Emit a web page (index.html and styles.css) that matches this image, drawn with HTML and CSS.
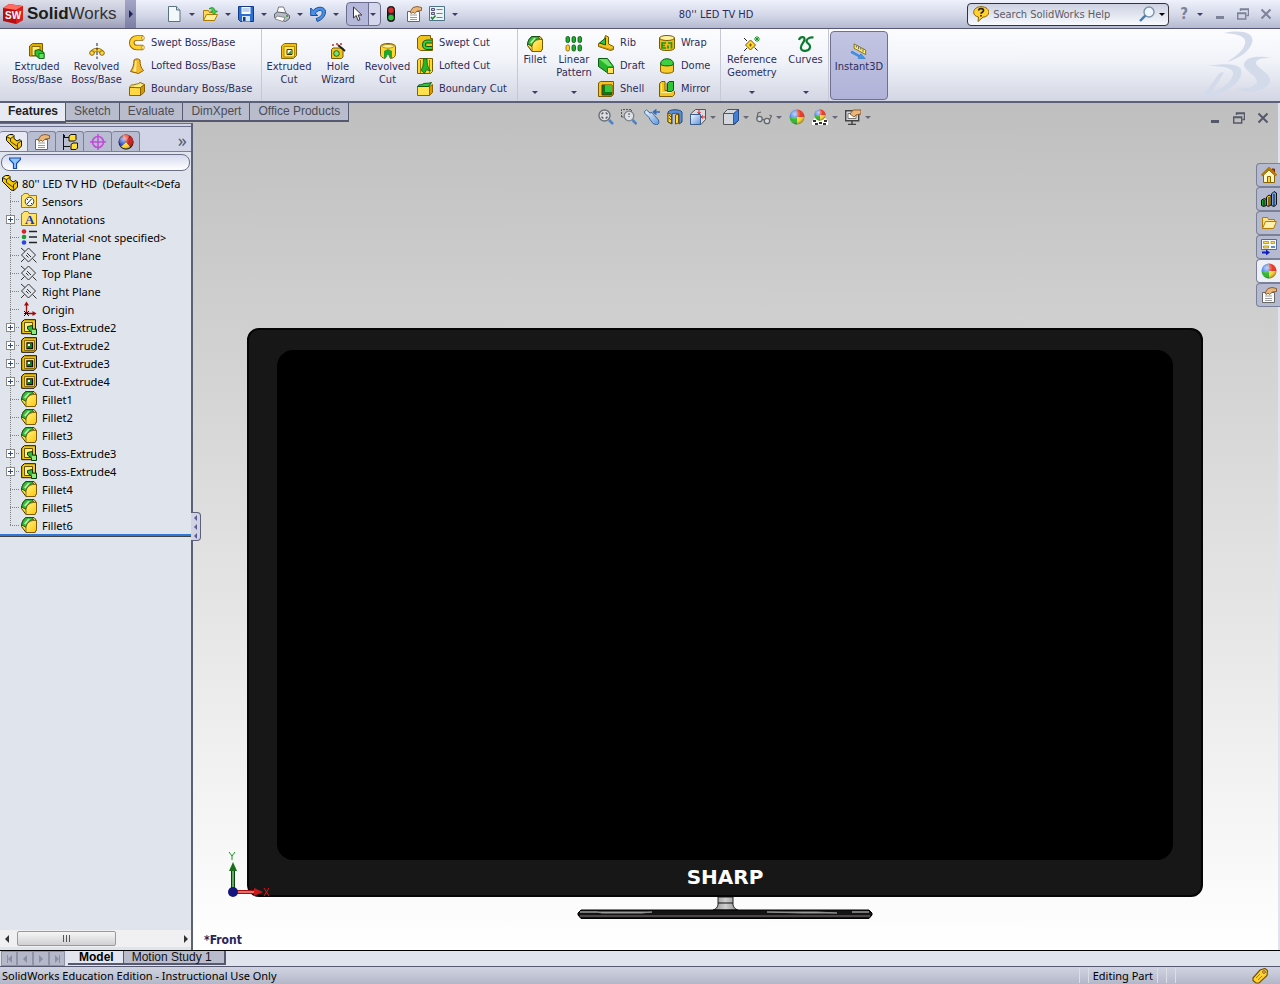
FILE: index.html
```
<!DOCTYPE html>
<html lang="en">
<head>
    <meta charset="UTF-8">
    <meta name="viewport" content="width=device-width, initial-scale=1.0">
    <title>SolidWorks - 80" LED TV HD</title>
    <link rel="stylesheet" href="styles.css">
</head>
<body>

    <!-- shared icons -->
    <svg class="sprite" aria-hidden="true">
        <defs>
            <linearGradient id="gold" x1="0" y1="0" x2="1" y2="1"><stop offset="0" stop-color="#fff68a"/><stop offset="1" stop-color="#ffc400"/></linearGradient>
            <linearGradient id="glass" x1="0" y1="0" x2="1" y2="1"><stop offset="0" stop-color="#f4faff"/><stop offset="1" stop-color="#5d93dc"/></linearGradient>
            <linearGradient id="chrome" x1="0" x2="1"><stop offset="0" stop-color="#8d8d8d"/><stop offset="0.5" stop-color="#cfcfcf"/><stop offset="1" stop-color="#8d8d8d"/></linearGradient>
            <radialGradient id="shine" cx="0.35" cy="0.3" r="0.7"><stop offset="0" stop-color="#fff" stop-opacity="0.7"/><stop offset="0.6" stop-color="#fff" stop-opacity="0"/><stop offset="1" stop-color="#000" stop-opacity="0.35"/></radialGradient>
        </defs>
        <symbol id="i-new" viewBox="0 0 16 16"><path d="M2.5.5h8l3.500 3.500v11.500h-11.500z" fill="#f3f8fb" stroke="#5a7280"/><path d="M10.500.5v3.500h3.500" fill="#cfdde5" stroke="#5a7280"/></symbol>
        <symbol id="i-open" viewBox="0 0 16 16"><path d="M1.500 14.500v-10h5l1 2h5v8z" fill="#ffd75a" stroke="#b37a00"/><path d="M1.500 14.500l3-6h11l-3 6z" fill="#ffef9e" stroke="#b37a00"/><path d="M7 3c3-3 6-1 6 2h2.500l-3.500 3.500-3.500-3.500h2c0-2-1.500-2.500-3.500-2z" fill="#3ed23e" stroke="#0b7d1b" stroke-width=".6"/></symbol>
        <symbol id="i-save" viewBox="0 0 16 16"><path d="M.5.5h15v15h-13l-2-2z" fill="#2c6fd0" stroke="#123a85"/><path d="M3.500 1h9v7h-9z" fill="#fff"/><path d="M4.500 3h7M4.500 5h7" stroke="#7aa7e0"/><path d="M4 10h8v5.500h-8z" fill="#d5e4f7"/><path d="M5 11h2.500v4h-2.500z" fill="#123a85"/></symbol>
        <symbol id="i-print" viewBox="0 0 16 16"><path d="M3 7l1.500-6h5l2.500 6z" fill="#fff" stroke="#777"/><path d="M.5 8l3-2 8 1 4 2.500v3l-4 3-11-4z" fill="#b9bcc6" stroke="#5c6170"/><path d="M3 10l8 1.500-2 4-8-2.500z" fill="#fff" stroke="#6a6a6a" stroke-width=".7"/><path d="M12 10h2" stroke="#22a022" stroke-width="1.500"/></symbol>
        <symbol id="i-undo" viewBox="0 0 16 16"><path d="M.7 2v7.500h7l-2.500-2.300c3-3.500 7-3.700 7-.7 0 3-2.500 5-6 6l1 3c5-1.500 8.500-6 8.300-10-.3-5-8-6-12.300-1z" fill="#4b90e6" stroke="#174f9f"/></symbol>
        <symbol id="i-cursor" viewBox="0 0 16 16"><path d="M4.500 1v11l2.700-2.500 1.800 5 2-.8-1.900-4.700h3.700z" fill="#fff" stroke="#333"/></symbol>
        <symbol id="i-light" viewBox="0 0 16 16"><rect x="4.500" y=".5" width="7" height="15" rx="3" fill="#2b2b2b" stroke="#111"/><circle cx="8" cy="4.300" r="2.700" fill="#e02a2a"/><circle cx="8" cy="11.500" r="2.700" fill="#2fc53a"/></symbol>
        <symbol id="i-props" viewBox="0 0 16 16"><path d="M1.500 5.500h12v10h-12z" fill="#fff" stroke="#666"/><path d="M4 9h7M4 11.500h7M4 13.500h7" stroke="#9a9a9a"/><path d="M4 6l3-4.500 4-1 4.500 1v3l-4 .5-3 2.500-1.500-1.500-2 1.500z" fill="#e9b779" stroke="#79461a" stroke-width=".8"/></symbol>
        <symbol id="i-options" viewBox="0 0 16 16"><path d="M.5.5h15v14h-15z" fill="#edf4f6" stroke="#4d7488"/><path d="M2.500 2.500h3v2h-3zM2.500 6.500h3v2h-3z" fill="#bed3e5" stroke="#557"/><path d="M7.500 3.500h6M7.500 7.500h6M7.500 11.500h6" stroke="#66899a"/><path d="M2 11l1.500 2 3-3.500" fill="none" stroke="#178a2c" stroke-width="1.600"/></symbol>
        <symbol id="i-extrude" viewBox="0 0 16 16"><path d="M.5 3l3-2.500h10v9l-3 3.500h-10z" fill="#e0ac00" stroke="#7a5b00"/><path d="M3 3.500h8v9h-8z" fill="#ffee72" stroke="#8a6900"/><path d="M6 7.500l4-1 5 3v6h-5l-4-4z" fill="#2fbf2f" stroke="#0b5a12"/><path d="M10 10.500h5v5h-5z" fill="#5fe05a" stroke="#0b5a12" stroke-width=".7"/></symbol>
        <symbol id="i-cut" viewBox="0 0 16 16"><path d="M.5 3l3-2.500h12v12l-3 3h-12z" fill="#f0bd10" stroke="#8a6500"/><path d="M3 3.500h10.500v10.500h-10.500z" fill="#ffe75a" stroke="#b08a00"/><path d="M6 6.500h5v5h-5z" fill="#fff" stroke="#3d3000"/><path d="M6.500 11l4-4v4z" fill="#1fa52b"/></symbol>
        <symbol id="i-revolve" viewBox="0 0 16 16"><path d="M3 10c1-4 9-4 10 0" fill="none" stroke="#8a6300" stroke-width="4"/><path d="M3 10c1-4 9-4 10 0" fill="none" stroke="#ffd530" stroke-width="2.400"/><circle cx="3" cy="10" r="2.300" fill="#ffd84a" stroke="#8a6300"/><circle cx="13" cy="10" r="2.300" fill="#ffd84a" stroke="#8a6300"/><path d="M8 0v16" stroke="#222" stroke-dasharray="3 1.500"/></symbol>
        <symbol id="i-sweep" viewBox="0 0 16 16"><path d="M14 3h-6c-7 0-7 9.500 0 9.500h6" fill="none" stroke="#8b5f00" stroke-width="5.500"/><path d="M14 3h-6c-7 0-7 9.500 0 9.500h6" fill="none" stroke="#ffd02e" stroke-width="3.800"/><ellipse cx="14" cy="3" rx="1.300" ry="2.200" fill="#fff2a0" stroke="#8b5f00" stroke-width=".6"/><ellipse cx="14" cy="12.500" rx="1.300" ry="2.200" fill="#fff2a0" stroke="#8b5f00" stroke-width=".6"/></symbol>
        <symbol id="i-loft" viewBox="0 0 16 16"><path d="M5 2c2-1.500 4-1.500 6 0 0 5 1 8 3.500 10.500l-5 3-8-2c2-3 3.500-6 3.500-11.500z" fill="#f4b92e" stroke="#8b5f00"/><path d="M6 3c0 5-1 8-2 10l3 .8c.5-4 .5-7 .5-10.800z" fill="#ffe98b"/></symbol>
        <symbol id="i-boundary" viewBox="0 0 16 16"><path d="M.5 6.500h11v8h-11z" fill="#ffd842" stroke="#8a6300"/><path d="M11.500 6.500l4-3v7.500l-4 3.500z" fill="#d69a00" stroke="#8a6300"/><path d="M.5 6.500c2-4 3-2 5.500-3s3 0 5-2l4.500 2-4 3c-3 1-7-1-11 0z" fill="#ffec80" stroke="#8a6300"/></symbol>
        <symbol id="i-wizard" viewBox="0 0 16 16"><path d="M1.500 6.500l1.500-1.500h10v9l-1.500 1.500h-10z" fill="#f0c21a" stroke="#7a5b00"/><circle cx="6.500" cy="10.500" r="2.800" fill="#7be070" stroke="#136b18"/><path d="M8 2l7 6" stroke="#222" stroke-width="2"/><path d="M2 2h2M3 1v2M6 1h2M7 0v2M11 0v2M10 1h2" stroke="#d02a1a"/></symbol>
        <symbol id="i-revcut" viewBox="0 0 16 16"><path d="M.5 3.500c0-4 15-4 15 0v8c0 3-4 4-5 4l-2.500-6-3 6c-2-.5-4.500-1.500-4.500-4z" fill="#ffd733" stroke="#7a5b00"/><ellipse cx="8" cy="3.300" rx="6" ry="1.800" fill="#fff2a0" stroke="#7a5b00" stroke-width=".6"/><path d="M8 6l4 2v7h-2l-2-4-2 4h-2v-7z" fill="#21a52c"/></symbol>
        <symbol id="i-sweepcut" viewBox="0 0 16 16"><path d="M.5 3l3-2.500h10v3h2v12h-12l-3-2z" fill="#f0c21a" stroke="#7a5b00"/><path d="M15 6.500h-5c-4 0-4 6.500 0 6.500h5" fill="none" stroke="#0b5a12" stroke-width="4"/><path d="M15 6.500h-5c-4 0-4 6.500 0 6.500h5" fill="none" stroke="#38cf3c" stroke-width="2"/></symbol>
        <symbol id="i-loftcut" viewBox="0 0 16 16"><path d="M.5 2l2-1.500h13v13l-2 2h-13z" fill="#ffd733" stroke="#7a5b00"/><path d="M3.500 2v13M12.500 2v13" stroke="#a37a00"/><path d="M6.500.8h3.500c0 6 1 9 3.500 12l-4-1-2 3.500-3.500-3c2-3 2.500-6 2.500-11.500z" fill="#25b52d" stroke="#0b5a12" stroke-width=".8"/></symbol>
        <symbol id="i-boundcut" viewBox="0 0 16 16"><path d="M.5 5.500h12v9h-12z" fill="#ffe14e" stroke="#8a6300"/><path d="M12.500 5.500l3-2v8l-3 3z" fill="#d69a00" stroke="#8a6300"/><path d="M.5 5.500c2-3 3-1 5.500-2.500s4 0 8.500-1.500l-3 4z" fill="#2fc536" stroke="#0b5a12"/></symbol>
        <symbol id="i-fillet" viewBox="0 0 16 16"><path d="M5 .5h8l2.500 3v9l-1.500 3h-9l-4.500-6c0-4 2-8 4.500-9z" fill="#ffe14a" stroke="#4d3900"/><path d="M.7 8c.5-4 2.500-7 5-7.500h5l2 2c-4 .5-7 4-7.500 8z" fill="#35b83c" stroke="#0b4a12" stroke-width=".8"/><path d="M3 6.500l4-4.500h2l-4.500 5.500z" fill="#b4f2ac"/><path d="M5 15.500v-5c.5-4 3-6.500 7-7h3.500v9l-1.500 3z" fill="url(#gold)" stroke="#6b5000" stroke-width=".8"/></symbol>
        <symbol id="i-pattern" viewBox="0 0 18 16"><g fill="#1fae2b" stroke="#0a4c12" stroke-width=".8"><rect x="1" y=".5" width="3.500" height="6" rx="1.500"/><rect x="7" y=".5" width="3.500" height="6" rx="1.500"/><rect x="13" y=".5" width="3.500" height="6" rx="1.500"/><rect x="7" y="9" width="3.500" height="6" rx="1.500"/><rect x="13" y="9" width="3.500" height="6" rx="1.500"/></g><rect x="1" y="9" width="3.500" height="6" rx="1.500" fill="#ffd024" stroke="#7a5b00" stroke-width=".8"/></symbol>
        <symbol id="i-rib" viewBox="0 0 16 16"><path d="M7.500.5l3 1.500v7l5 2.500v3l-3 1-12-4v-3l5-1.500z" fill="#f6c420" stroke="#7a5b00"/><path d="M1.500 8l6-5v7z" fill="#2fc536" stroke="#0b5a12"/><path d="M1 11l11 3.500 3.500-1" fill="none" stroke="#b98b00"/></symbol>
        <symbol id="i-draft" viewBox="0 0 16 16"><path d="M.5.5h9l6 8v7h-5l-10-7z" fill="#27b52f" stroke="#0b5a12"/><path d="M1 1h8l5 7h-4z" fill="#6ee366"/><path d="M9.500 9.500h6v6h-6z" fill="#ffe25a" stroke="#7a5b00"/></symbol>
        <symbol id="i-shell" viewBox="0 0 16 16"><path d="M.5 2l2-1.500h13v13l-2 2h-13z" fill="#f5c41d" stroke="#7a5b00"/><path d="M4 4h10v10h-10z" fill="#0c7a18" stroke="#4d3900"/><path d="M7 4h7v7h-7z" fill="#35c73b"/></symbol>
        <symbol id="i-wrap" viewBox="0 0 16 16"><path d="M.5 3v10c0 3.500 15 3.500 15 0v-10z" fill="#f0b818" stroke="#7a5b00"/><ellipse cx="8" cy="3" rx="7.500" ry="2.500" fill="#fff2a0" stroke="#7a5b00"/><path d="M7 8h-4v5h4M3 10.500h3M9 8h3.500v5.500M9 13.500v-3" fill="none" stroke="#119a20" stroke-width="1.700"/></symbol>
        <symbol id="i-dome" viewBox="0 0 16 16"><path d="M1.500 6v7c0 3 13 3 13 0v-7z" fill="#f7cb2c" stroke="#7a5b00"/><path d="M1.500 6c0-7 13-7 13 0 0 2.500-13 2.500-13 0z" fill="#3fcf42" stroke="#0b5a12"/></symbol>
        <symbol id="i-mirror" viewBox="0 0 16 16"><path d="M.5 2.500l2-2h3.500v9h2v-7l2-2h4.500v9l1 1v3l-2 2h-13z" fill="#f5c41d" stroke="#7a5b00"/><path d="M8.500 2.500l2-2h4v8l-2 2h-4z" fill="#2fc536" stroke="#0b5a12"/><path d="M2.500 3v8.500h10" fill="none" stroke="#fff2a0"/></symbol>
        <symbol id="i-refgeo" viewBox="0 0 16 16"><path d="M6.500 4l5 5-5 5-5-5z" fill="#ffd733" stroke="#7a5b00"/><path d="M0 2l3 3M13.500 14.500l-3-3M0 15l3-3" stroke="#222"/><path d="M6.500 7.500v3M5 9h3" stroke="#7a5b00"/><path d="M13 0v6M10 3h6M11 1l4 4M15 1l-4 4" stroke="#119a20"/></symbol>
        <symbol id="i-curves" viewBox="0 0 16 16"><path d="M1 4C2 .5 7 0 6.500 3.500S2 9 3 12.500S11 15.500 12 11.500S8 7.500 8.500 5S12 1 15.500 1.500" fill="none" stroke="#0b7a30" stroke-width="2.200"/></symbol>
        <symbol id="i-instant" viewBox="0 0 18 18"><path d="M3.500 1l13 7v5l-13-7z" fill="#ffee7a" stroke="#7a6a00"/><path d="M6 3v2M8.500 4v3M11 5.500v2M13.500 7v3" stroke="#555"/><path d="M1 9l9 5.200 1-2 5 5.300-8-.2 1-1.600-9-4.700z" fill="#3d9bee" stroke="#1c6cc0" stroke-width=".6"/></symbol>
        <symbol id="i-part" viewBox="0 0 16 16"><path d="M.5 2.500l3-2h3.500l1 1v3l3 2.500 3-1.500 1.500 1.500v5l-3.500 3.500-3-.5-8.500-8.500z" fill="#f6c800" stroke="#111"/><path d="M1 3l3.500 1.500v3l7 5 .5 3M4.500 4.500l3-2M11.500 12.500v-3l3.500-2.500" fill="none" stroke="#111" stroke-width=".8"/><path d="M2 2.500l2-1 2.500.5-2 1.500z" fill="#fff18a"/></symbol>
        <symbol id="i-config" viewBox="0 0 16 16"><path d="M1.500 0v16M2 3.500h5M2 12.500h6" stroke="#111"/><path d="M1 1h2v2h-2z" fill="#111"/><path d="M7 2l2-1.500h5v5l-1.500 1.500h-5.500zM9 10.500l2-1.500h4.500v5l-1.500 1.500h-5z" fill="#ffde33" stroke="#111"/></symbol>
        <symbol id="i-target" viewBox="0 0 16 16"><circle cx="8" cy="8" r="5.500" fill="none" stroke="#c04bd8" stroke-width="1.600"/><path d="M8 0v16M0 8h16" stroke="#c04bd8" stroke-width="1.500"/></symbol>
        <symbol id="i-ball" viewBox="0 0 16 16"><path d="M8 8l-.5-7.500a7.500 7.500 0 0 0-7 7.500z" fill="#3a78e8"/><path d="M8 8l-.5-7.500a7.500 7.500 0 0 1 8 7.500z" fill="#e8361c"/><path d="M8 8h-7.500a7.500 7.500 0 0 0 7.500 7.500z" fill="#2fb52f"/><path d="M8 8h7.500a7.500 7.500 0 0 1-7.500 7.500z" fill="#ffd733"/><circle cx="8" cy="8" r="7.500" fill="url(#shine)"/></symbol>
        <symbol id="i-display" viewBox="0 0 16 16"><circle cx="8" cy="8" r="7.500" fill="#111"/><path d="M8 8L4 1.800a7.200 7.200 0 0 1 8 0z" fill="#f04030"/><path d="M8 8l4.500-6a7.200 7.200 0 0 1 .5 11z" fill="#d01818"/><path d="M8 8l4.500 5a7.200 7.200 0 0 1-9.500-.5z" fill="#ffd733"/><path d="M8 8l-5 4.500a7.200 7.200 0 0 1 .5-10z" fill="#2c48c8"/><circle cx="8" cy="8" r="7.500" fill="url(#shine)"/></symbol>
        <symbol id="i-funnel" viewBox="0 0 12 12"><path d="M.5 1h11v1.500l-4 4v5h-3v-5l-4-4z" fill="#8cc8ff" stroke="#1449b8" stroke-width="1.200"/></symbol>
        <symbol id="i-sensor" viewBox="0 0 16 16"><path d="M.5 14.500v-12h1l1.500-2h4l1 2h7.500v12z" fill="#ffe36a" stroke="#a87a00"/><circle cx="8.500" cy="8.500" r="4.300" fill="#fff" stroke="#345"/><path d="M6 11l4.500-5M6 6.500h1M10 10.500h1" stroke="#234"/></symbol>
        <symbol id="i-material" viewBox="0 0 16 16"><circle cx="3" cy="2.500" r="2.300" fill="#d8202a"/><circle cx="3" cy="8" r="2.300" fill="#1d9a32"/><circle cx="3" cy="13.500" r="2.300" fill="#2a48e0"/><path d="M8 2.500h8M8 8h8M8 13.500h8" stroke="#222" stroke-width="1.300"/></symbol>
        <symbol id="i-plane" viewBox="0 0 16 16"><path d="M7.500 1l7 7-7 7-7-7z" fill="none" stroke="#333"/><path d="M0 1l4 3.500M11.500 11.500l4 4M0 15l3.500-3.500M6 6l4 4M5 8l2.500 2.500" fill="none" stroke="#333"/></symbol>
        <symbol id="i-origin" viewBox="0 0 16 16"><path d="M5.500 12v-9M6 12.500h7" stroke="#a00c0c" stroke-width="1.300"/><path d="M5.500.5l2.500 4h-5zM15.500 12.500l-4-2.500v5z" fill="#a00c0c"/><path d="M3 10l5 5M8 10l-5 5M3 12.500h5" stroke="#111"/></symbol>
        <symbol id="i-boss" viewBox="0 0 16 16"><path d="M.7 3l2.800-2.300h11v11l-2 3h-11.800z" fill="#f2c90c" stroke="#111"/><path d="M3.500 3.500h8v9h-8z" fill="#fff07a" stroke="#6a5000"/><path d="M6.500 7.500l5-1v3.500h4v5.500h-5v-2.500l-4-3z" fill="#35b83c" stroke="#073d0c"/><path d="M11 11h4v4h-4z" fill="#8de886"/></symbol>
        <symbol id="i-cutfeat" viewBox="0 0 16 16"><path d="M.7 3l2.800-2.300h12v12l-2.500 2.600h-12.300z" fill="#f0bd00" stroke="#111"/><path d="M3.500 3.500h10v10h-10z" fill="#ffe23a" stroke="#8a6a00"/><path d="M6 6h5.500v5.500h-5.500z" fill="#fff" stroke="#111" stroke-width="1.300"/><path d="M7 11v-2h2v-2h2v4z" fill="#0f7a1c"/></symbol>
        <symbol id="i-zoomfit" viewBox="0 0 16 16"><circle cx="6.500" cy="6.500" r="5.500" fill="#dcdfe4" stroke="#6c7078" stroke-width="1.400"/><path d="M4 5.500v-1.500h1.500M7.500 4h1.500v1.500M9 7.500v1.500h-1.500M5.500 9h-1.500v-1.500" fill="none" stroke="#333"/><path d="M11 11l4 4" stroke="#4d82c8" stroke-width="2.500"/></symbol>
        <symbol id="i-zoomarea" viewBox="0 0 16 16"><path d="M.5 8v-7.500h10v7.500z" fill="none" stroke="#555" stroke-dasharray="2 1"/><circle cx="8" cy="7" r="4.800" fill="#dcdfe4" stroke="#7c8088" stroke-width="1.300"/><path d="M8 4v4" stroke="#444" stroke-dasharray="2 1"/><path d="M11.500 11l4 4" stroke="#4d82c8" stroke-width="2.500"/></symbol>
        <symbol id="i-prev" viewBox="0 0 16 16"><path d="M.5 2.500l2-1.500 3.500 3 2-.5 2.500 3 4 4.500.5 3-2 2-4-1.500-3-4-1-2-4-4z" fill="url(#glass)" stroke="#33699f"/><path d="M16 3h-5M12.500.5l-3 2.500 3 2.500" fill="none" stroke="#2a66c0" stroke-width="1.500"/></symbol>
        <symbol id="i-section" viewBox="0 0 16 16"><path d="M1 3c2-3 12-3 14 0v10l-3 2v-10c-2-1-5-1-7 0v10l-4-2z" fill="#5a8fd8" stroke="#264b86"/><path d="M1 4l3.500 1.500v9l-3.500-1.500zM11.500 5v9l-3 1v-9z" fill="#ffd733" stroke="#6a4e00"/><path d="M2 6l2 2M2 9l2 2" stroke="#6a4e00"/></symbol>
        <symbol id="i-orient" viewBox="0 0 16 16"><path d="M.5 5l5-4.500h10v10l-4.500 5h-10.500z" fill="#d6dbe4" stroke="#555"/><path d="M.5 5.500h10v10h-10z" fill="url(#glass)" stroke="#3c5c8c"/><path d="M9 1v4M7.500 3l1.500 2 1.500-2M15.500 8h-4M13 6.500l-2 1.500 2 1.500" fill="none" stroke="#d02222"/></symbol>
        <symbol id="i-style" viewBox="0 0 16 16"><path d="M.5 4.500l4-4h11v11l-4 4h-11z" fill="#d4d8de" stroke="#555"/><path d="M10.500 4.500l5-4v11l-5 4z" fill="#3f7fd6" stroke="#264b86"/><path d="M.5 4.500h10v11" fill="none" stroke="#555"/></symbol>
        <symbol id="i-glasses" viewBox="0 0 16 16"><circle cx="3.500" cy="10" r="2.700" fill="#cfdbe6" stroke="#666" stroke-width="1.300"/><circle cx="11" cy="12" r="2.700" fill="#cfdbe6" stroke="#666" stroke-width="1.300"/><path d="M6 10l2.500 1M1 9l1-5 3-1M13.500 11l2-4-2-1" fill="none" stroke="#666" stroke-width="1.200"/></symbol>
        <symbol id="i-scene" viewBox="0 0 16 16"><path d="M0 12l3-3h10l3 3v4h-16z" fill="#fff"/><path d="M1 11h3v2h-3zM7 13h3v2h-3zM12 11h3v2h-3zM3 14h3v2h-3zM11 14h3v2h-3z" fill="#333"/><use href="#i-ball" x="2" y="0" width="12" height="12"/></symbol>
        <symbol id="i-viewset" viewBox="0 0 16 16"><path d="M.7 1.700h13v10h-13z" fill="#d5d8dd" stroke="#444" stroke-width="1.400"/><path d="M3 4.500h8v5h-8z" fill="#fff" stroke="#777"/><path d="M7 12v3M3 15.500h8" stroke="#444" stroke-width="1.500"/><path d="M5 5l3-4 3 0 5 0v4l-5 1-2 2z" fill="#e9b779" stroke="#79461a" stroke-width=".8"/></symbol>
        <symbol id="i-home" viewBox="0 0 16 16"><path d="M11 2h2.500v5h-2.500z" fill="#c9452c" stroke="#7c2414"/><path d="M2.500 8v7.500h11v-7.500l-5.500-5z" fill="#fff7c6" stroke="#8a6300"/><path d="M.5 8.500l7.500-7.500 7.500 7.500" fill="none" stroke="#b57a00" stroke-width="2.200"/><path d="M6.500 9.500h3v6h-3z" fill="#ffd04a" stroke="#8a6300"/></symbol>
        <symbol id="i-library" viewBox="0 0 16 16"><path d="M.5 9l3-1.500 2 1v6l-3 1-2-1z" fill="#22a52d" stroke="#111"/><path d="M5.500 6l2.500-2 2 1v9l-2.500 1.500-2-1z" fill="#f5c41d" stroke="#111"/><path d="M10.500 3l2.500-2.500 2.500 1.500v11.500l-2.500 2-2.500-1z" fill="#6da2ea" stroke="#111"/><path d="M8 6v9M13 3v12M3 9v6" stroke="#111"/></symbol>
        <symbol id="i-folder" viewBox="0 0 16 16"><path d="M1.500 13.500v-11h5l1 2h6v3" fill="#ffe28a" stroke="#b57a00"/><path d="M1.500 13.500l3-7h11l-3 7z" fill="#fff0b0" stroke="#b57a00"/></symbol>
        <symbol id="i-palette" viewBox="0 0 16 16"><path d="M.5.5h15v10h-15z" fill="#f5f7ff" stroke="#556a9c"/><path d="M2.500 2.500h5v2h-5zM10 2.500h3.500v2h-3.500zM2.500 7h5v2h-5z" fill="#ffe14a" stroke="#99811a" stroke-width=".7"/><path d="M10 7h4v2h-4z" fill="#6689c8"/><path d="M1 13.500h5" stroke="#1020c0" stroke-width="2"/><path d="M5 10.500l4 3-4 3z" fill="#1020c0"/></symbol>
        <symbol id="i-tag" viewBox="0 0 16 16"><path d="M1 10l7-8 5-1.500 2.500 2-.5 5-8 7.500h-3l-3-2.500z" fill="#ffd12e" stroke="#7a4e00" stroke-width="1.200"/><circle cx="12" cy="4" r="1.300" fill="#fff" stroke="#7a4e00"/><path d="M4 10l4-4M6 12l4-4" stroke="#a87a00"/></symbol>
        <symbol id="i-help" viewBox="0 0 16 16"><path d="M8 .7c10 0 10 10 2 10.500l-5 4.300.5-4.500c-7.500-1.300-6-10.300 2.500-10.300z" fill="#ffd02e" stroke="#8a6300"/><path d="M5.500 4.500c.5-2.500 5-2.300 5 0 0 1.800-2.500 1.500-2.500 3.300M8 9v1.500" fill="none" stroke="#222" stroke-width="1.700"/></symbol>
        <symbol id="i-search" viewBox="0 0 16 16"><circle cx="10" cy="6" r="5" fill="#eef6ff" stroke="#7d94a8" stroke-width="1.400"/><path d="M6.300 9.700l-5.300 5.300" stroke="#3f78b8" stroke-width="2.400"/></symbol>
        <symbol id="i-min" viewBox="0 0 12 12"><path d="M2 9.500h8" stroke-width="3" stroke="currentColor"/></symbol>
        <symbol id="i-restore" viewBox="0 0 12 12"><path d="M3.500 3v-2h8v6.500h-2M3 1.500h9" fill="none" stroke="currentColor" stroke-width="1.400"/><path d="M.7 5h8v6h-8zM1 5.500h8" fill="none" stroke="currentColor" stroke-width="1.400"/></symbol>
        <symbol id="i-close" viewBox="0 0 12 12"><path d="M1.500 1.500l9 9M10.500 1.500l-9 9" stroke="currentColor" stroke-width="2"/></symbol>
    </svg>

    <header class="titlebar">
        <div class="brand">
            <svg class="brand-logo" viewBox="0 0 20 20">
                <path d="M0 4l6-4 14 2v14l-7 4-13-3z" fill="#b80d12"/>
                <path d="M0 4l6-4 14 2-7 4z" fill="#ff6b5e"/>
                <path d="M13 6l7-4v14l-7 4z" fill="#d9201f"/>
                <text x="2" y="15" class="logo-letters">SW</text>
            </svg>
            <span class="brand-name"><b>Solid</b>Works</span>
            <button class="brand-menu" aria-label="Show menu"></button>
        </div>
        <nav class="quick">
            <button class="quick-btn" aria-label="New"><svg><use href="#i-new"/></svg><i class="arrow"></i></button>
            <button class="quick-btn" aria-label="Open"><svg><use href="#i-open"/></svg><i class="arrow"></i></button>
            <button class="quick-btn" aria-label="Save"><svg><use href="#i-save"/></svg><i class="arrow"></i></button>
            <button class="quick-btn" aria-label="Print"><svg><use href="#i-print"/></svg><i class="arrow"></i></button>
            <button class="quick-btn" aria-label="Undo"><svg><use href="#i-undo"/></svg><i class="arrow"></i></button>
            <button class="quick-btn select-btn" aria-label="Select"><svg><use href="#i-cursor"/></svg><i class="arrow"></i></button>
            <button class="quick-btn single" aria-label="Rebuild"><svg><use href="#i-light"/></svg></button>
            <button class="quick-btn single" aria-label="File properties"><svg><use href="#i-props"/></svg></button>
            <button class="quick-btn" aria-label="Options"><svg><use href="#i-options"/></svg><i class="arrow"></i></button>
        </nav>
        <div class="doc-title">80'' LED TV HD</div>
        <form class="search">
            <svg><use href="#i-help"/></svg>
            <input type="text" placeholder="Search SolidWorks Help" aria-label="Search SolidWorks Help">
            <svg><use href="#i-search"/></svg>
            <i class="arrow dark"></i>
        </form>
        <div class="app-controls">
            <button class="help-btn" aria-label="Help">?<i class="arrow"></i></button>
            <button aria-label="Minimize"><svg><use href="#i-min"/></svg></button>
            <button aria-label="Restore"><svg><use href="#i-restore"/></svg></button>
            <button aria-label="Close"><svg><use href="#i-close"/></svg></button>
        </div>
    </header>

    <div class="ribbon">
        <div class="group group-boss">
            <button class="big"><svg><use href="#i-extrude"/></svg>Extruded<br>Boss/Base</button>
            <button class="big"><svg><use href="#i-revolve"/></svg>Revolved<br>Boss/Base</button>
            <div class="stack">
                <button><svg><use href="#i-sweep"/></svg>Swept Boss/Base</button>
                <button><svg><use href="#i-loft"/></svg>Lofted Boss/Base</button>
                <button><svg><use href="#i-boundary"/></svg>Boundary Boss/Base</button>
            </div>
        </div>
        <div class="group group-cut">
            <button class="big"><svg><use href="#i-cut"/></svg>Extruded<br>Cut</button>
            <button class="big"><svg><use href="#i-wizard"/></svg>Hole<br>Wizard</button>
            <button class="big"><svg><use href="#i-revcut"/></svg>Revolved<br>Cut</button>
            <div class="stack">
                <button><svg><use href="#i-sweepcut"/></svg>Swept Cut</button>
                <button><svg><use href="#i-loftcut"/></svg>Lofted Cut</button>
                <button><svg><use href="#i-boundcut"/></svg>Boundary Cut</button>
            </div>
        </div>
        <div class="group group-feature">
            <button class="big drop"><svg><use href="#i-fillet"/></svg>Fillet<i class="arrow"></i></button>
            <button class="big drop"><svg class="wide"><use href="#i-pattern"/></svg>Linear<br>Pattern<i class="arrow"></i></button>
            <div class="stack">
                <button><svg><use href="#i-rib"/></svg>Rib</button>
                <button><svg><use href="#i-draft"/></svg>Draft</button>
                <button><svg><use href="#i-shell"/></svg>Shell</button>
            </div>
            <div class="stack">
                <button><svg><use href="#i-wrap"/></svg>Wrap</button>
                <button><svg><use href="#i-dome"/></svg>Dome</button>
                <button><svg><use href="#i-mirror"/></svg>Mirror</button>
            </div>
        </div>
        <div class="group group-reference">
            <button class="big drop"><svg><use href="#i-refgeo"/></svg>Reference<br>Geometry<i class="arrow"></i></button>
            <button class="big drop"><svg><use href="#i-curves"/></svg>Curves<i class="arrow"></i></button>
        </div>
        <button class="big instant"><svg class="wide"><use href="#i-instant"/></svg>Instant3D</button>
        <svg class="ds-logo" viewBox="0 0 72 70">
            <path d="M24 3c20-4 31 1 28 10-3 9-14 16-25 19 9-6 16-11 18-18 2-8-8-10-21-11z"/>
            <path d="M8 36c25-4 36-1 33 9-3 12-21 20-41 25l18-25c2-3 7-4 5-1l-12 19c11-4 20-11 22-18 2-7-9-9-25-9z"/>
            <path d="M71 28c-13-3-26-1-27 6-1 6 14 12 13 18-1 5-12 7-22 7 14 5 34 2 35-8 1-8-14-13-14-18 0-4 6-5 15-5z"/>
        </svg>
    </div>

    <main class="workspace">
        <nav class="tabs">
            <a class="active" href="#features">Features</a>
            <a href="#sketch">Sketch</a>
            <a href="#evaluate">Evaluate</a>
            <a href="#dimxpert">DimXpert</a>
            <a href="#office">Office Products</a>
        </nav>

        <div class="work-row">
            <aside class="panel">
                <div class="panel-tabs">
                    <button class="active" aria-label="Feature manager"><svg><use href="#i-part"/></svg></button>
                    <button aria-label="Property manager"><svg><use href="#i-props"/></svg></button>
                    <button aria-label="Configuration manager"><svg><use href="#i-config"/></svg></button>
                    <button aria-label="DimXpert manager"><svg><use href="#i-target"/></svg></button>
                    <button aria-label="Display manager"><svg><use href="#i-display"/></svg></button>
                    <span class="more">»</span>
                </div>
                <div class="filter">
                    <svg><use href="#i-funnel"/></svg>
                    <input type="text" aria-label="Filter">
                </div>
                <div class="tree-root"><svg><use href="#i-part"/></svg>80'' LED TV HD&nbsp; (Default&lt;&lt;Defa</div>
                <ul class="tree">
                    <li><span class="branch"></span><svg><use href="#i-sensor"/></svg>Sensors</li>
                    <li>
                        <span class="branch"><button class="toggle" aria-label="Expand"></button></span>
                        <svg viewBox="0 0 16 16"><path d="M.5 14.500v-12h1l1.500-2h4l1 2h7.500v12z" fill="#ffe36a" stroke="#a87a00"/><text x="4" y="13" class="note-letter">A</text></svg>
                        Annotations
                    </li>
                    <li><span class="branch"></span><svg><use href="#i-material"/></svg>Material &lt;not specified&gt;</li>
                    <li><span class="branch"></span><svg><use href="#i-plane"/></svg>Front Plane</li>
                    <li><span class="branch"></span><svg><use href="#i-plane"/></svg>Top Plane</li>
                    <li><span class="branch"></span><svg><use href="#i-plane"/></svg>Right Plane</li>
                    <li><span class="branch"></span><svg><use href="#i-origin"/></svg>Origin</li>
                    <li><span class="branch"><button class="toggle" aria-label="Expand"></button></span><svg><use href="#i-boss"/></svg>Boss-Extrude2</li>
                    <li><span class="branch"><button class="toggle" aria-label="Expand"></button></span><svg><use href="#i-cutfeat"/></svg>Cut-Extrude2</li>
                    <li><span class="branch"><button class="toggle" aria-label="Expand"></button></span><svg><use href="#i-cutfeat"/></svg>Cut-Extrude3</li>
                    <li><span class="branch"><button class="toggle" aria-label="Expand"></button></span><svg><use href="#i-cutfeat"/></svg>Cut-Extrude4</li>
                    <li><span class="branch"></span><svg><use href="#i-fillet"/></svg>Fillet1</li>
                    <li><span class="branch"></span><svg><use href="#i-fillet"/></svg>Fillet2</li>
                    <li><span class="branch"></span><svg><use href="#i-fillet"/></svg>Fillet3</li>
                    <li><span class="branch"><button class="toggle" aria-label="Expand"></button></span><svg><use href="#i-boss"/></svg>Boss-Extrude3</li>
                    <li><span class="branch"><button class="toggle" aria-label="Expand"></button></span><svg><use href="#i-boss"/></svg>Boss-Extrude4</li>
                    <li><span class="branch"></span><svg><use href="#i-fillet"/></svg>Fillet4</li>
                    <li><span class="branch"></span><svg><use href="#i-fillet"/></svg>Fillet5</li>
                    <li><span class="branch"></span><svg><use href="#i-fillet"/></svg>Fillet6</li>
                </ul>
                <div class="rollback"></div>
                <div class="hscroll">
                    <i class="tri left"></i>
                    <div class="thumb"><i></i><i></i><i></i></div>
                    <i class="tri right"></i>
                </div>
                <button class="splitter" aria-label="Collapse panel"><i class="tri left"></i><i class="tri left"></i><i class="tri left"></i></button>
            </aside>

            <section class="viewport">
                <div class="tv">
                    <div class="tv-screen"></div>
                    <div class="tv-brand">SHARP</div>
                </div>
                <svg class="stand" viewBox="0 0 296 22">
                    <path d="M141 0h15v8c1 3 2 4 5 5h-25c3-1 4-2 5-5z" fill="url(#chrome)" stroke="#222"/>
                    <path d="M141 6h15" stroke="#111"/>
                    <path d="M4 13h288l3 3v2l-3 3.500h-288l-3-3.500v-2z" fill="#141414" stroke="#000"/>
                    <path d="M3 19h290" stroke="#4b4545" stroke-width="2"/>
                    <path d="M20 15h55l-10 1h-40zM190 15h50l20 1h-35z" fill="#bbb" stroke="#8f8f8f"/>
                    <path d="M3 15h17M275 15h17" stroke="#777" stroke-width="2"/>
                </svg>
                <svg class="triad" viewBox="0 0 46 50">
                    <path d="M5 2l3 4 3-4M8 6v4" fill="none" stroke="#129a12"/>
                    <path d="M9 18v24" stroke="#123f12" stroke-width="4"/>
                    <path d="M9 18v24" stroke="#5fae5f" stroke-width="2"/>
                    <path d="M9 12l4 9h-8z" fill="#1a6e1a"/>
                    <path d="M9 42h22" stroke="#a01010" stroke-width="4"/>
                    <path d="M9 42h22" stroke="#e86a6a" stroke-width="2"/>
                    <path d="M39 42l-9-4v8z" fill="#c81818"/>
                    <path d="M40 38l5 8M45 38l-5 8" stroke="#f01010"/>
                    <circle cx="9" cy="42" r="5" fill="#15157d"/>
                </svg>
                <div class="view-name">*Front</div>
            </section>
        </div>

        <div class="headsup">
            <button aria-label="Zoom to fit"><svg><use href="#i-zoomfit"/></svg></button>
            <button aria-label="Zoom to area"><svg><use href="#i-zoomarea"/></svg></button>
            <button aria-label="Previous view"><svg><use href="#i-prev"/></svg></button>
            <button aria-label="Section view"><svg><use href="#i-section"/></svg></button>
            <button aria-label="View orientation"><svg><use href="#i-orient"/></svg><i class="arrow"></i></button>
            <button aria-label="Display style"><svg><use href="#i-style"/></svg><i class="arrow"></i></button>
            <button aria-label="Hide or show items"><svg><use href="#i-glasses"/></svg><i class="arrow"></i></button>
            <button aria-label="Edit appearance"><svg><use href="#i-ball"/></svg></button>
            <button aria-label="Apply scene"><svg><use href="#i-scene"/></svg><i class="arrow"></i></button>
            <button aria-label="View settings"><svg><use href="#i-viewset"/></svg><i class="arrow"></i></button>
        </div>
        <div class="doc-controls">
            <button aria-label="Minimize document"><svg><use href="#i-min"/></svg></button>
            <button aria-label="Restore document"><svg><use href="#i-restore"/></svg></button>
            <button aria-label="Close document"><svg><use href="#i-close"/></svg></button>
        </div>
        <div class="task-tabs">
            <button aria-label="Resources"><svg><use href="#i-home"/></svg></button>
            <button aria-label="Design library"><svg><use href="#i-library"/></svg></button>
            <button aria-label="File explorer"><svg><use href="#i-folder"/></svg></button>
            <button aria-label="View palette"><svg><use href="#i-palette"/></svg></button>
            <button class="active" aria-label="Appearances"><svg><use href="#i-ball"/></svg></button>
            <button aria-label="Custom properties"><svg><use href="#i-props"/></svg></button>
        </div>
    </main>

    <div class="model-tabs">
        <button class="step" aria-label="First"><i class="bar"></i><i class="tri left"></i></button>
        <button class="step" aria-label="Previous"><i class="tri left"></i></button>
        <button class="step" aria-label="Next"><i class="tri right"></i></button>
        <button class="step" aria-label="Last"><i class="tri right"></i><i class="bar"></i></button>
        <a class="active" href="#model">Model</a>
        <a href="#motion">Motion Study 1</a>
    </div>

    <footer class="status">
        <span class="status-text">SolidWorks Education Edition - Instructional Use Only</span>
        <span class="cell empty"></span>
        <span class="cell">Editing Part</span>
        <span class="cell empty"></span>
        <span class="cell empty"></span>
        <span class="cell last"><svg><use href="#i-tag"/></svg></span>
    </footer>

</body>
</html>
```
FILE: styles.css
```
* {
    box-sizing: border-box;
}
body {
    margin: 0;
    height: 100vh;
    display: flex;
    flex-direction: column;
    overflow: hidden;
    background-color: #e0e4ec;
    font-family: "DejaVu Sans Condensed", "DejaVu Sans", sans-serif;
    font-size: 11px;
    color: #2d2d5a;
}
button {
    margin: 0;
    padding: 0;
    border: none;
    background: none;
    font: inherit;
    color: inherit;
}
svg {
    width: 16px;
    height: 16px;
    flex: none;
}
.sprite {
    position: absolute;
    width: 0;
    height: 0;
}
.note-letter {
    font: bold 13px "Liberation Serif", serif;
    fill: #1a35c0;
}
.arrow {
    display: block;
    flex: none;
    border: 3px solid transparent;
    border-top-color: #3c3c66;
    border-bottom: none;
}
.arrow.dark {
    border-top-color: #000;
}
.tri {
    display: block;
    flex: none;
    border: 4px solid transparent;
}
.tri.left {
    border-right-color: #333;
    border-left: none;
}
.tri.right {
    border-left-color: #333;
    border-right: none;
}

/* title bar */
.titlebar {
    height: 29px;
    flex: none;
    display: flex;
    align-items: center;
    background: linear-gradient(#eff1fc, #d3d7e8 55%, #b6bad0);
    border-bottom: 1px solid #55587a;
}
.brand {
    width: 136px;
    height: 28px;
    flex: none;
    display: flex;
    align-items: center;
    gap: 4px;
    padding-left: 3px;
    background: linear-gradient(#dcdeea, #c3c6d8 50%, #9c9fb8);
}
.brand-logo {
    width: 20px;
    height: 20px;
}
.logo-letters {
    font: bold 10px "Liberation Sans", sans-serif;
    fill: #fff;
}
.brand-name {
    flex: 1;
    font-family: "Liberation Sans", sans-serif;
    font-size: 17px;
    color: #333;
}
.brand-name b {
    color: #1c1c1c;
}
.brand-menu {
    width: 11px;
    height: 28px;
    display: flex;
    align-items: center;
    justify-content: center;
    background: linear-gradient(#a3a6c6, #7c7fa4);
}
.brand-menu::before {
    content: "";
    border: 4px solid transparent;
    border-left-color: #22225a;
    border-right: none;
}
.quick {
    display: flex;
    align-items: center;
    margin-left: 30px;
}
.quick-btn {
    width: 36px;
    height: 24px;
    display: flex;
    align-items: center;
    gap: 7px;
}
.quick-btn.single {
    width: 23px;
}
.select-btn {
    width: 35px;
    margin-right: 2px;
    padding-left: 2px;
    gap: 5px;
    border: 1px solid #6a6d8c;
    border-radius: 4px;
    background: linear-gradient(90deg, #b5b8da 21px, #6a6d8c 21px, #6a6d8c 22px, #d5d8ec 22px);
}
.doc-title {
    flex: 1;
    text-align: center;
}
.search {
    width: 202px;
    height: 23px;
    flex: none;
    display: flex;
    align-items: center;
    gap: 4px;
    padding: 0 3px 0 5px;
    border: 1px solid #333;
    border-radius: 4px;
    background: linear-gradient(#cdd1e2, #f8f9fd);
}
.search input {
    flex: 1;
    min-width: 0;
    padding: 0;
    border: none;
    background: none;
    font: inherit;
    color: #555;
}
.search input::placeholder {
    color: #5c5c68;
    opacity: 1;
}
.app-controls {
    display: flex;
    align-items: center;
    gap: 11px;
    padding: 0 8px 0 11px;
    color: #7e8299;
}
.app-controls button {
    display: flex;
    align-items: center;
}
.app-controls svg,
.doc-controls svg {
    width: 12px;
    height: 12px;
}
.app-controls .help-btn {
    gap: 9px;
    font-size: 15px;
    font-weight: bold;
}

/* ribbon */
.ribbon {
    height: 74px;
    flex: none;
    display: flex;
    background: linear-gradient(#fdfdff, #f1f3f9 45%, #d3d6e4);
    border-bottom: 2px solid #5c6078;
}
.group {
    flex: none;
    display: grid;
    border-right: 1px solid #c6c9d4;
}
.group-boss {
    padding-left: 8px;
    grid-template-columns: 58px 61px 134px;
}
.group-cut {
    grid-template-columns: 54px 44px 55px 102px;
}
.group-feature {
    grid-template-columns: 34px 44px 61px 63px;
}
.group-reference {
    grid-template-columns: 62px 45px;
}
.big {
    display: flex;
    flex-direction: column;
    align-items: center;
    padding-top: 14px;
    line-height: 13px;
    text-align: center;
    white-space: nowrap;
}
.big svg {
    margin-bottom: 1px;
}
.big .wide {
    width: 18px;
}
.big.drop {
    padding: 7px 0 7px;
}
.drop .arrow {
    margin-top: auto;
}
.stack {
    display: flex;
    flex-direction: column;
    padding: 2px 0 0 2px;
}
.stack button {
    height: 23px;
    display: flex;
    align-items: center;
    gap: 6px;
    white-space: nowrap;
}
.instant {
    width: 58px;
    height: 69px;
    flex: none;
    margin: 2px 0 0 1px;
    padding-top: 11px;
    border: 1px solid #6e7090;
    border-radius: 4px;
    background: linear-gradient(#c3c5e3, #b0b2d8);
}
.ds-logo {
    width: 72px;
    height: 70px;
    margin: 1px 8px 0 auto;
    fill: #d3daea;
}

/* workspace */
.workspace {
    position: relative;
    flex: 1;
    min-height: 0;
    display: flex;
    flex-direction: column;
    background: linear-gradient(#bfbfbf, #fff);
    border-right: 2px solid #dfe3ee;
}
.tabs {
    flex: none;
    display: flex;
    align-items: flex-start;
    font-family: "Liberation Sans", sans-serif;
    font-size: 12px;
}
.tabs a {
    height: 19px;
    padding: 0 8px;
    line-height: 17px;
    border: 1px solid #55586e;
    border-width: 0 1px 2px 0;
    background-color: #b9bccd;
    color: #4c4c55;
    text-decoration: none;
}
.tabs .active {
    height: 20px;
    padding-right: 7px;
    background-color: #e8eaf3;
    color: #222;
    font-weight: bold;
}
.work-row {
    flex: 1;
    min-height: 0;
    display: flex;
}
.panel {
    position: relative;
    width: 193px;
    flex: none;
    display: flex;
    flex-direction: column;
    background-color: #e0e4ec;
    border-right: 2px solid #5c6078;
    color: #000;
    font-family: "Noto Sans", sans-serif;
}
.panel-tabs {
    display: flex;
    align-items: flex-end;
    height: 29px;
    flex: none;
    border-top: 4px double #6c708c;
    border-bottom: 1px solid #7b8099;
    background-color: #d0d4e6;
}
.panel-tabs button {
    width: 28px;
    height: 20px;
    display: flex;
    align-items: center;
    justify-content: center;
    border: 1px solid #7b8099;
    border-left: none;
    border-bottom: none;
    border-radius: 3px 3px 0 0;
    background-color: #b9bdd2;
}
.panel-tabs .active {
    background-color: #e6e9f3;
}
.more {
    margin-left: auto;
    padding-right: 4px;
    font-size: 18px;
    line-height: 22px;
    color: #555a70;
}
.filter {
    height: 17px;
    flex: none;
    display: flex;
    align-items: center;
    margin: 2px 1px 3px 1px;
    padding-left: 7px;
    border: 1px solid #6b7088;
    border-radius: 8px;
    background: linear-gradient(#d5daee, #fff);
}
.filter svg {
    width: 12px;
    height: 12px;
}
.filter input {
    flex: 1;
    min-width: 0;
    height: 13px;
    padding: 0 4px;
    border: none;
    background: none;
}
.tree-root {
    height: 18px;
    flex: none;
    display: flex;
    align-items: center;
    gap: 4px;
    padding-left: 2px;
    white-space: nowrap;
}
.tree {
    margin: 0;
    padding: 0;
    list-style: none;
}
.tree li {
    height: 18px;
    display: flex;
    align-items: center;
    white-space: nowrap;
}
.tree svg {
    margin-right: 5px;
}
.branch {
    width: 21px;
    height: 18px;
    display: flex;
    align-items: center;
    padding-left: 6px;
    background:
        repeating-linear-gradient(#808080 0 1px, transparent 1px 2px) 10px 0 / 1px 100% no-repeat,
        repeating-linear-gradient(90deg, #808080 0 1px, transparent 1px 2px) 10px 9px / 10px 1px no-repeat;
}
.tree li:last-child .branch {
    background-size: 1px 10px, 10px 1px;
}
.toggle {
    width: 9px;
    height: 9px;
    border: 1px solid #8a8a8a;
    background:
        linear-gradient(#2b4a90, #2b4a90) center / 5px 1px no-repeat,
        linear-gradient(#2b4a90, #2b4a90) center / 1px 5px no-repeat,
        #fff;
}
.rollback {
    height: 3px;
    flex: none;
    border-top: 2px solid #2d78d8;
    border-bottom: 1px solid #444;
}
.hscroll {
    height: 17px;
    display: flex;
    align-items: center;
    margin-top: auto;
    margin-bottom: 3px;
    padding: 0 3px 0 5px;
    background-color: #f0f0f2;
}
.thumb {
    width: 99px;
    height: 15px;
    display: flex;
    align-items: center;
    justify-content: center;
    gap: 2px;
    margin: 0 auto 0 8px;
    border: 1px solid #999;
    border-radius: 2px;
    background: linear-gradient(#f6f6f6, #d0d0d3);
}
.thumb i {
    width: 1px;
    height: 7px;
    background-color: #555;
}
.splitter {
    position: absolute;
    right: -10px;
    top: 389px;
    width: 10px;
    height: 29px;
    display: flex;
    flex-direction: column;
    align-items: center;
    justify-content: space-around;
    border: 1px solid #5c6078;
    border-left: none;
    border-radius: 0 4px 4px 0;
    background-color: #d0d4e2;
}
.splitter .tri {
    border-width: 3px;
    border-left: none;
    border-right-color: #5a5a9c;
}

/* graphics area */
.viewport {
    position: relative;
    flex: 1;
    min-width: 0;
    display: flex;
    flex-direction: column;
    align-items: center;
    padding: 205px 75px 31px 54px;
}
.tv {
    flex: 1;
    align-self: stretch;
    display: flex;
    flex-direction: column;
    padding: 20px 28px 0;
    border: 2px solid #050505;
    border-radius: 12px;
    background-color: #171717;
}
.tv-screen {
    flex: 1;
    border-radius: 16px;
    background-color: #000;
}
.tv-brand {
    height: 35px;
    text-align: center;
    font-family: "DejaVu Sans", sans-serif;
    font-size: 20px;
    font-weight: bold;
    line-height: 35px;
    color: #fff;
}
.stand {
    width: 296px;
    height: 22px;
}
.triad {
    position: absolute;
    left: 31px;
    bottom: 50px;
    width: 46px;
    height: 50px;
}
.view-name {
    position: absolute;
    left: 11px;
    bottom: 3px;
    font-size: 12px;
    font-weight: bold;
    color: #26265c;
}
.headsup {
    position: absolute;
    top: 6px;
    left: 193px;
    right: 3px;
    display: flex;
    justify-content: center;
    gap: 7px;
}
.headsup button {
    display: flex;
    align-items: center;
    gap: 4px;
}
.headsup .arrow {
    border-top-color: #66687a;
}
.doc-controls {
    position: absolute;
    top: 9px;
    right: 9px;
    display: flex;
    gap: 12px;
    color: #55586a;
}
.doc-controls button {
    display: flex;
}
.task-tabs {
    position: absolute;
    top: 60px;
    right: -2px;
    display: flex;
    flex-direction: column;
}
.task-tabs button {
    width: 24px;
    height: 24px;
    display: flex;
    align-items: center;
    padding-left: 4px;
    border: 1px solid #7a8098;
    border-right: none;
    border-radius: 4px 0 0 4px;
    background-color: #b6bad0;
}
.task-tabs .active {
    background-color: #eef0f7;
}

/* bottom bars */
.model-tabs {
    height: 16px;
    flex: none;
    display: flex;
    padding-left: 1px;
    border-top: 1px solid #000;
    background-color: #e0e4ec;
    font-family: "Liberation Sans", sans-serif;
    font-size: 12px;
    line-height: 13px;
}
.step {
    width: 16px;
    height: 15px;
    display: flex;
    align-items: center;
    justify-content: center;
    border: 1px solid #8f93a8;
    background-color: #b5b8c8;
}
.step .tri.left {
    border-right-color: #8a8ea6;
}
.step .tri.right {
    border-left-color: #8a8ea6;
}
.bar {
    width: 1px;
    height: 8px;
    background-color: #8a8ea6;
}
.model-tabs a {
    height: 14px;
    padding: 0 12px 0 8px;
    border: 1px solid #55586e;
    border-width: 0 2px 2px 0;
    background-color: #b9bccd;
    color: #111;
    text-decoration: none;
}
.model-tabs .active {
    margin-left: 3px;
    padding: 0 9px 0 11px;
    border-right-width: 1px;
    background-color: #e3e6ee;
    color: #000;
    font-weight: bold;
}
.status {
    height: 18px;
    flex: none;
    display: flex;
    align-items: center;
    border-top: 1px solid #55586e;
    background: linear-gradient(#d0d4e2, #b3b7c8);
    font-family: "Noto Sans", sans-serif;
    color: #000;
}
.status-text {
    flex: 1;
    padding-left: 2px;
}
.cell {
    height: 15px;
    padding: 0 4px;
    line-height: 15px;
    border-left: 1px solid #dcdee6;
}
.cell.last {
    width: 105px;
    padding-left: 76px;
}
```
